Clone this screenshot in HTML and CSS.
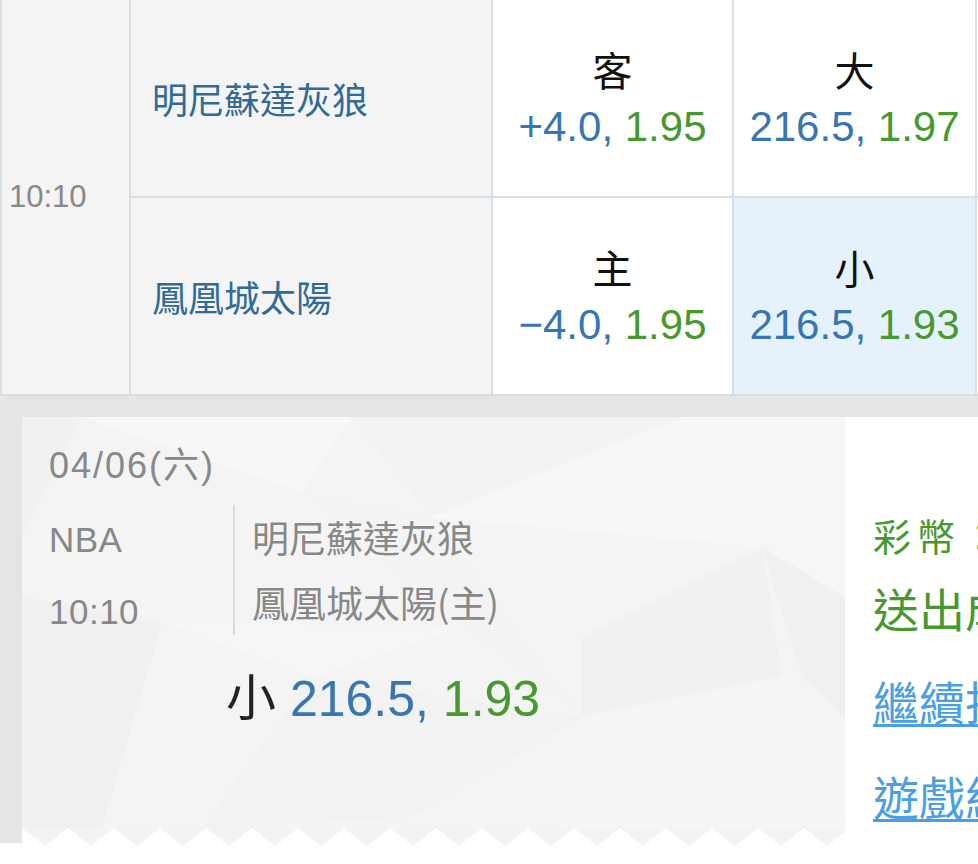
FILE: index.html
```html
<!DOCTYPE html>
<html lang="zh-Hant">
<head>
  <meta charset="UTF-8">
  <title>投注單</title>
  <meta name="viewport" content="width=device-width, initial-scale=1.0">
  <link rel="stylesheet" href="styles.css">
</head>
<body>

<!-- odds table -->
<div class="odds-table">
  <div class="cell time">10:10</div>
  <div class="cell team">明尼蘇達灰狼</div>
  <div class="cell odd">
    <span class="label">客</span>
    <span class="line"><span class="blue">+4.0,</span> <span class="green">1.95</span></span>
  </div>
  <div class="cell odd">
    <span class="label">大</span>
    <span class="line"><span class="blue">216.5,</span> <span class="green">1.97</span></span>
  </div>
  <div class="cell odd"></div>
  <div class="cell team">鳳凰城太陽</div>
  <div class="cell odd">
    <span class="label">主</span>
    <span class="line"><span class="blue">&minus;4.0,</span> <span class="green">1.95</span></span>
  </div>
  <div class="cell odd selected">
    <span class="label">小</span>
    <span class="line"><span class="blue">216.5,</span> <span class="green">1.93</span></span>
  </div>
  <div class="cell odd"></div>
</div>

<!-- bet result -->
<div class="result">
  <div class="result-inner">
    <div class="ticket">
      <svg class="ticket-bg" width="823" height="411" viewBox="0 0 823 411" xmlns="http://www.w3.org/2000/svg">
        <polygon points="0,0 60,0 0,120" fill="#f1f1f1"/>
        <polygon points="60,0 330,0 280,75" fill="#f7f7f7"/>
        <polygon points="330,0 660,0 410,100" fill="#f2f2f2"/>
        <polygon points="410,100 660,0 740,130" fill="#f7f7f7"/>
        <polygon points="660,0 823,0 823,180 740,130" fill="#f6f6f6"/>
        <polygon points="280,75 410,100 560,300 440,210" fill="#f3f3f3"/>
        <polygon points="0,180 140,205 80,411 0,411" fill="#f0f0f0"/>
        <polygon points="140,205 440,210 290,260" fill="#f6f6f6"/>
        <polygon points="290,260 560,300 390,400 180,411" fill="#f2f2f2"/>
        <polygon points="560,300 560,220 740,130 760,260" fill="#f1f1f1"/>
        <polygon points="560,300 760,260 823,411 540,411" fill="#f5f5f5"/>
        <polygon points="740,130 823,180 823,300 780,260" fill="#f0f0f0"/>
      </svg>
      <div class="date">04/06(六)</div>
      <div class="match">
        <div class="meta">
          <div>NBA</div>
          <div>10:10</div>
        </div>
        <div class="teams">
          <div>明尼蘇達灰狼</div>
          <div>鳳凰城太陽(主)</div>
        </div>
      </div>
      <div class="pick">小 <span class="blue">216.5,</span> <span class="green">1.93</span></div>
    </div>
    <div class="side">
      <div class="coins">彩幣：1,000</div>
      <div class="sent">送出成功</div>
      <a class="link" href="#">繼續投注</a>
      <a class="link" href="#">遊戲紀錄</a>
    </div>
  </div>
</div>

</body>
</html>
```

FILE: styles.css
```css
body { margin: 0; width: 978px; height: 864px; overflow: hidden; background: #fff; font-family: "Liberation Sans", "Noto Sans CJK TC", sans-serif; color: #222; }
.blue { color: #3775b3; }
.green { color: #47992f; }

.odds-table { display: grid; grid-template-columns: 127px 360px 239px 241px 200px; grid-template-rows: 196px 196px; gap: 2px; padding: 0 0 2px 2px; background: #d6dee6; width: max-content; }
.cell { background: #fff; display: flex; align-items: center; }
.time { grid-row: span 2; background: #f4f4f4; padding-left: 7px; font-size: 31px; color: #888; }
.team { background: #f4f4f4; padding-left: 21px; font-size: 36px; color: #2f6a98; font-family: "Noto Sans CJK TC", sans-serif; }
.odd { flex-direction: column; justify-content: center; align-items: center; }
.odd.selected { background: #e5f2fc; }
.label { font-size: 40px; line-height: 58px; color: #111; font-family: "Noto Sans CJK TC", sans-serif; }
.line { font-size: 42px; line-height: 58px; white-space: nowrap; }

.result { background: #e5e5e5; padding: 21px 0 0 22px; height: 447px; box-sizing: border-box; }
.result-inner { display: flex; background: #fff; height: 100%; }

.ticket { position: relative; width: 823px; height: 411px; flex-shrink: 0; box-sizing: border-box; padding: 29px 0 0 27px; background: #f4f4f4; color: #888; font-size: 36px; letter-spacing: 2px; }
.ticket-bg { position: absolute; left: 0; top: 0; z-index: 0; }
.ticket > div { position: relative; z-index: 1; }
.ticket::after { content: ""; position: absolute; left: 0; right: 0; bottom: -18px; height: 18px; background: conic-gradient(from -52deg at 50% 100%, #f3f3f3 104deg, transparent 0) 0 0 / 46px 18px repeat-x; }
.date { line-height: 40px; }
.match { display: flex; align-items: flex-start; margin-top: 19px; }
.meta { width: 184px; margin-top: -1px; font-size: 35px; letter-spacing: 0.5px; }
.meta div { line-height: 72px; }
.teams { border-left: 2px solid #dcdcdc; padding-left: 17px; height: 130px; font-family: "Noto Sans CJK TC", sans-serif; font-size: 37px; letter-spacing: 0; }
.teams div { line-height: 65px; }
.pick { margin-top: 23px; padding-left: 177px; font-size: 50px; line-height: 56px; color: #222; letter-spacing: 0; white-space: nowrap; }

.side { padding: 93px 0 0 28px; white-space: nowrap; font-family: "Noto Sans CJK TC", sans-serif; }
.coins { font-size: 38px; line-height: 50px; letter-spacing: 6px; color: #47992f; }
.sent { margin-top: 17px; font-size: 46px; line-height: 60px; color: #47992f; }
.link { display: block; font-size: 46px; line-height: 60px; color: #4a9fe2; text-decoration: underline; text-decoration-thickness: 3px; text-underline-offset: 4px; }
.sent + .link { margin-top: 33px; }
.link + .link { margin-top: 35px; }
```
